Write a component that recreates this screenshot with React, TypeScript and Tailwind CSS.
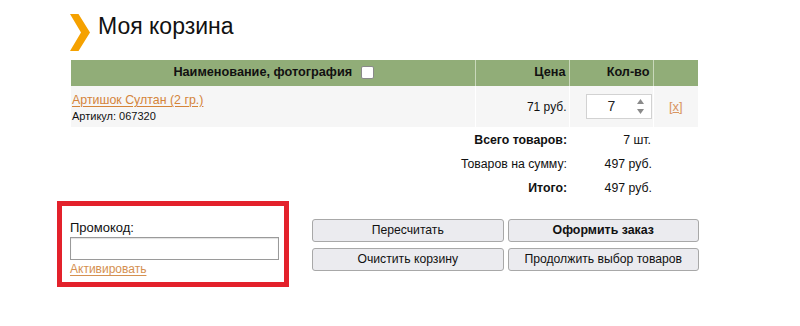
import React from "react";

export default function App() {
  return (
    <div className="w-[800px] h-[326px] bg-white text-black overflow-hidden" style={{ fontFamily: '"Liberation Sans", Arial, sans-serif' }}>
      {/* Title */}
      <div className="flex items-start pt-[12px] pl-[69px] h-[60px]">
        <svg width="22" height="37" viewBox="0 0 22 37" className="mt-[2px] shrink-0">
          <polygon points="1,0 9.5,0 21,18.5 9.5,37 1,37 12,18.5" fill="#f5a100" />
        </svg>
        <h1 className="ml-[7px] text-[23px] leading-[28px] font-normal text-[#111] whitespace-nowrap">
          Моя корзина
        </h1>
      </div>

      {/* Table */}
      <div className="ml-[71px] w-[627px]">
        <table className="w-[627px] table-fixed border-collapse text-[12.3px]">
          <colgroup>
            <col className="w-[404px]" />
            <col className="w-[94px]" />
            <col className="w-[84px]" />
            <col className="w-[45px]" />
          </colgroup>
          <thead>
            <tr className="h-[26px] bg-[#91ad78]">
              <th className="p-0 font-bold text-[12.7px] text-[#111]">
                <div className="flex items-center justify-center gap-[9px] pl-[2px]">
                  <span>Наименование, фотография</span>
                  <span className="inline-block w-[13px] h-[13px] bg-white border border-[#8a8a8a] rounded-[2px]" />
                </div>
              </th>
              <th className="p-0 pr-[3px] text-right font-bold text-[12.7px] text-[#111] border-l border-[#c9d8bb]">Цена</th>
              <th className="p-0 pr-[3px] text-right font-bold text-[12.7px] text-[#111] border-l border-[#c9d8bb]">Кол-во</th>
              <th className="p-0 border-l border-[#c9d8bb]"></th>
            </tr>
          </thead>
          <tbody>
            <tr className="h-[41px] bg-[#f6f6f6]">
              <td className="p-0 align-top">
                <div className="flex flex-col pt-[6px] pl-[1px]">
                  <a href="#" className="text-[12.4px] leading-[16px] text-[#d4843a] underline underline-offset-[2px] self-start">Артишок Султан (2 гр.)</a>
                  <span className="text-[11px] leading-[14px] mt-[1px] text-[#111]">Артикул: 067320</span>
                </div>
              </td>
              <td className="p-0 pr-[2px] text-right text-[12px] text-[#111] border-l border-white">71 руб.</td>
              <td className="p-0 border-l border-white">
                <div className="flex justify-end pr-[1px]">
                  <div className="relative w-[66px] h-[25px] bg-white border border-[#d2d2d2] flex items-center">
                    <span className="w-[50px] text-center text-[14px] text-[#222]">7</span>
                    <div className="absolute right-[7px] top-[4px] flex flex-col items-center gap-[5px]">
                      <svg width="7" height="5" viewBox="0 0 7 5"><polygon points="0,5 3.5,0 7,5" fill="#8a8a8a" /></svg>
                      <svg width="7" height="5" viewBox="0 0 7 5"><polygon points="0,0 7,0 3.5,5" fill="#8a8a8a" /></svg>
                    </div>
                  </div>
                </div>
              </td>
              <td className="p-0 text-center border-l border-white">
                <a href="#" className="text-[13px] text-[#d99560]">[<span className="underline">x</span>]</a>
              </td>
            </tr>
            <tr className="h-[1px]"><td colSpan={4} className="p-0"></td></tr>
            <tr className="h-[24px]">
              <td colSpan={2} className="p-0 pr-[2px] text-right font-bold text-[#111]">Всего товаров:</td>
              <td className="p-0 pr-[2px] text-right text-[#111]">7 шт.</td>
              <td className="p-0"></td>
            </tr>
            <tr className="h-[24px]">
              <td colSpan={2} className="p-0 pr-[2px] text-right text-[#111]">Товаров на сумму:</td>
              <td className="p-0 pr-[1px] text-right text-[#111]">497 руб.</td>
              <td className="p-0"></td>
            </tr>
            <tr className="h-[24px]">
              <td colSpan={2} className="p-0 pr-[2px] text-right font-bold text-[#111]">Итого:</td>
              <td className="p-0 pr-[1px] text-right text-[#111]">497 руб.</td>
              <td className="p-0"></td>
            </tr>
          </tbody>
        </table>
      </div>

      {/* Bottom area */}
      <div className="flex items-start mt-[1px]">
        <div className="ml-[57px] w-[232px] h-[86px] border-[5px] border-[#e3212b] flex flex-col pl-[8px] pt-[14px]">
          <span className="text-[13px] leading-[16px] text-[#111]">Промокод:</span>
          <div className="mt-[1px] w-[209px] h-[23px] bg-white border border-[#9a9a9a] shadow-[inset_0_1px_1px_rgba(0,0,0,0.12)]" />
          <a href="#" className="mt-[2px] text-[12px] leading-[15px] text-[#d59050] underline underline-offset-[2px] self-start">Активировать</a>
        </div>
        <div className="ml-[23px] mt-[18px] grid grid-cols-2 gap-x-[4px] gap-y-[6px] w-[387px]">
          <button className="h-[23px] rounded-[3px] border border-[#a8a8a8] bg-[#ebebef] text-[12.2px] text-[#111]">Пересчитать</button>
          <button className="h-[23px] rounded-[3px] border border-[#a8a8a8] bg-[#ebebef] text-[12.4px] font-bold text-[#111]">Оформить заказ</button>
          <button className="h-[23px] rounded-[3px] border border-[#a8a8a8] bg-[#ebebef] text-[12.2px] text-[#111]">Очистить корзину</button>
          <button className="h-[23px] rounded-[3px] border border-[#a8a8a8] bg-[#ebebef] text-[12.2px] text-[#111]">Продолжить выбор товаров</button>
        </div>
      </div>
    </div>
  );
}
